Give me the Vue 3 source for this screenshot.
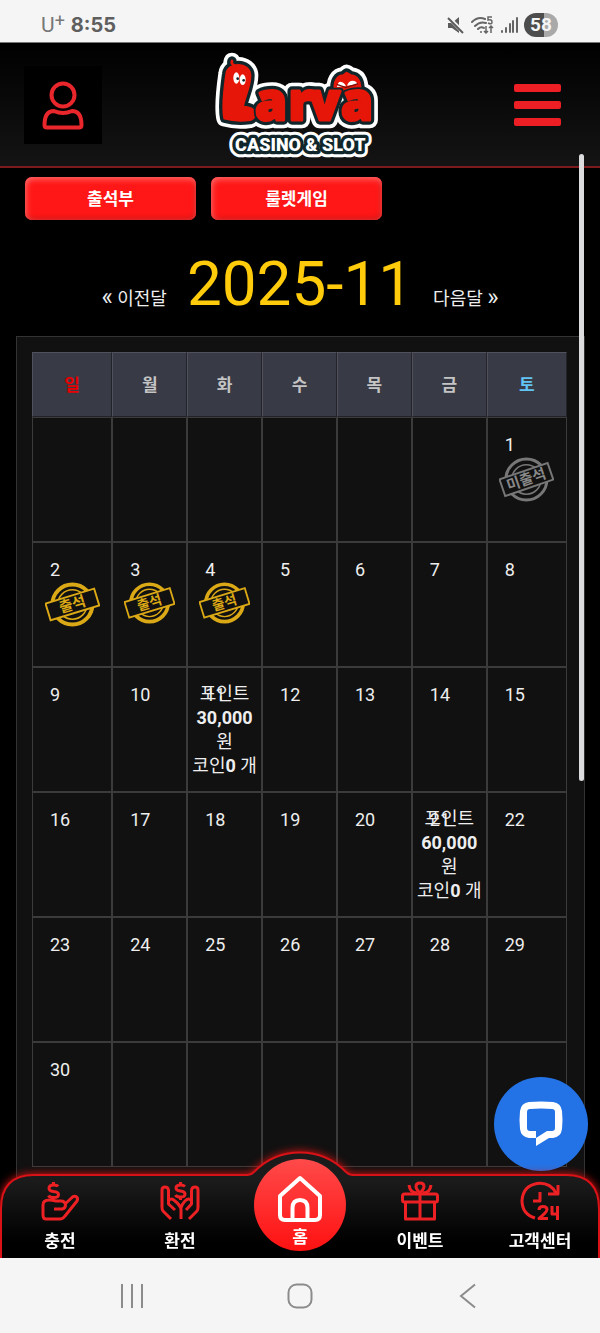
<script setup>
const weekdays = [
  { name: '일', tone: 'sun' },
  { name: '월', tone: '' },
  { name: '화', tone: '' },
  { name: '수', tone: '' },
  { name: '목', tone: '' },
  { name: '금', tone: '' },
  { name: '토', tone: 'sat' },
]

const attended = [2, 3, 4]
const missed = [1]
const rewards = { 11: '30,000', 21: '60,000' }
const firstWeekday = 6
const dayCount = 30

const weeks = Array.from({ length: 6 }, (_, w) =>
  Array.from({ length: 7 }, (_, d) => {
    const day = w * 7 + d - firstWeekday + 1
    return day > 0 && day <= dayCount ? day : null
  })
)
</script>

<template>
  <div class="page">
    <div class="status">
      <div class="status-left">
        <span class="carrier">U<sup>+</sup></span>
        <span class="clock">8:55</span>
      </div>
      <div class="status-right">
        <svg viewBox="0 0 18 20" width="18" height="20" aria-hidden="true">
          <path d="M1 8h4l7-6v16l-7-5H1z" fill="#5b5b5b" />
          <path d="M0 1l17 17" stroke="#f5f5f5" stroke-width="4" />
          <path d="M1 3l15 15" stroke="#5b5b5b" stroke-width="2" />
        </svg>
        <svg viewBox="0 0 24 20" width="24" height="20" aria-hidden="true" fill="none" stroke="#666" stroke-width="2">
          <path d="M1 7Q7 1 14 4M4 11q5-5 11-3M7 14q3-3 6-1" stroke-linecap="round" />
          <circle cx="10" cy="17" r="1" fill="#666" stroke="none" />
          <path d="M21 2h-4v3q4-1 4 2t-4 1" stroke-width="1.5" />
          <path d="M15 11v7m-2-2l2 2 2-2M20 18v-7m-2 2l2-2 2 2" stroke-width="1.5" />
        </svg>
        <svg viewBox="0 0 17 18" width="17" height="18" aria-hidden="true" fill="#666">
          <rect x="0" y="14" width="2" height="3" rx="1" /><rect x="4" y="11" width="2" height="6" rx="1" />
          <rect x="8" y="7" width="2" height="10" rx="1" /><rect x="11" y="4" width="2" height="13" rx="1" />
          <rect x="15" y="1" width="2" height="16" rx="1" />
        </svg>
        <span class="battery">58</span>
      </div>
    </div>

    <header class="header">
      <button class="user" type="button" aria-label="내 정보">
        <svg viewBox="0 0 42 50" width="42" height="50" fill="none" stroke="#e9262b" stroke-width="4" stroke-linejoin="round" aria-hidden="true">
          <circle cx="21" cy="15" r="11.5" />
          <path d="M12 31Q21 35 30 31C37 31 39.500 37 39.500 45Q39.500 47.500 37 47.500H5Q2.500 47.500 2.500 45C2.500 37 5 31 12 31Z" />
        </svg>
      </button>
      <a class="logo" href="#" aria-label="Larva Casino &amp; Slot">
        <svg viewBox="30 20 540 345" width="180" height="115">
          <defs>
            <g id="logo-worm" stroke-linejoin="round" stroke-linecap="round">
              <path d="M74 234C66 200 76 128 80 100C84 66 148 66 150 104C151 140 132 168 128 200Q150 200 160 210Q170 232 150 238Q110 244 74 234Z" />
              <path d="M108 78Q92 72 96 62" fill="none" />
            </g>
            <g id="logo-cap" stroke-linejoin="round">
              <path d="M406 155C400 122 414 106 430 106L440 98L452 106C474 108 482 124 480 155Z" />
            </g>
            <g id="logo-letters" stroke-linejoin="round">
              <text class="wordmark" x="166 266 328 424" y="240">arva</text>
            </g>
          </defs>
          <g stroke="#fff" fill="#fff" stroke-width="50">
            <use href="#logo-worm" /><use href="#logo-cap" /><use href="#logo-letters" />
          </g>
          <text class="tagline plate" x="301" y="331" text-anchor="middle" aria-hidden="true">CASINO &amp; SLOT</text>
          <g stroke="#10262a" fill="#10262a" stroke-width="28">
            <use href="#logo-worm" /><use href="#logo-cap" /><use href="#logo-letters" />
          </g>
          <g stroke="#e61608" fill="#e61608" stroke-width="8">
            <use href="#logo-worm" /><use href="#logo-cap" />
          </g>
          <use href="#logo-letters" stroke="#10262a" fill="#10262a" stroke-width="20" />
          <use href="#logo-letters" stroke="#e61608" fill="#e61608" stroke-width="9" />
          <g fill="#fff">
            <ellipse cx="109" cy="113" rx="9" ry="17" /><ellipse cx="128" cy="118" rx="9" ry="16" />
            <path d="M411 140Q414 122 424 125Q434 127 438 138ZM441 136Q446 121 458 121Q470 121 472 132Z" />
          </g>
          <g fill="#10262a"><circle cx="113" cy="115" r="4" /><circle cx="131" cy="120" r="4" /></g>
          <path d="M410 132L438 142L474 130" stroke="#7b0d08" stroke-width="4" fill="none" />
          <text class="tagline" x="301" y="331" text-anchor="middle">CASINO &amp; SLOT</text>
        </svg>
      </a>
      <button class="menu" type="button" aria-label="메뉴"><i></i><i></i><i></i></button>
    </header>

    <main class="main">
      <div class="actions">
        <button type="button">출석부</button>
        <button type="button">룰렛게임</button>
      </div>

      <div class="month">
        <a href="#"><span class="chev">«</span> 이전달</a>
        <h1>2025-11</h1>
        <a href="#">다음달 <span class="chev">»</span></a>
      </div>

      <section class="frame">
        <table>
          <thead>
            <tr>
              <th v-for="w in weekdays" :key="w.name" :class="w.tone" scope="col">{{ w.name }}</th>
            </tr>
          </thead>
          <tbody>
            <tr v-for="(week, i) in weeks" :key="i">
              <td v-for="(day, j) in week" :key="j">
                <span v-if="day" class="date">{{ day }}</span>
                <div v-if="rewards[day]" class="reward">
                  포인트<br /><b>{{ rewards[day] }}</b><br />원<br />코인<b>0</b> 개
                </div>
                <svg v-if="attended.includes(day)" class="stamp gold" viewBox="0 0 56 46">
                  <circle cx="28" cy="23" r="20.500" stroke-width="4" />
                  <circle cx="28" cy="23" r="15" stroke-width="1.500" />
                  <g transform="rotate(-17 28 23)">
                    <rect x="2" y="14" width="52" height="18" fill="#111" stroke-width="2" />
                    <text x="28" y="28" text-anchor="middle">출석</text>
                  </g>
                </svg>
                <svg v-if="missed.includes(day)" class="stamp grey" viewBox="0 0 56 46">
                  <circle cx="28" cy="23" r="21" stroke-width="3" />
                  <circle cx="28" cy="23" r="15" stroke-width="1.500" />
                  <g transform="rotate(-19 28 23)">
                    <rect x="2" y="14" width="52" height="18" fill="#111" stroke-width="2" />
                    <text x="28" y="28" text-anchor="middle">미출석</text>
                  </g>
                </svg>
              </td>
            </tr>
          </tbody>
        </table>
      </section>
    </main>

    <div class="scrollbar"></div>

    <div class="dock">
      <button class="chat" type="button" aria-label="채팅 상담">
        <svg viewBox="0 0 46 46" width="46" height="46" aria-hidden="true">
          <path d="M11 1Q23 0 35 1Q43 2 44 10Q45 19 44 28Q43 36 35 37H31L18 45V37H11Q3 36 2 28Q1 19 2 10Q3 2 11 1Z" fill="#fff" />
          <path d="M12 8Q23 7 34 8Q37 8 37 11V27Q37 30 34 30H29L18 37V30H12Q9 30 9 27V11Q9 8 12 8Z" fill="#2473e6" />
        </svg>
      </button>

      <nav class="tabs">
        <svg class="tabs-bg" viewBox="0 0 600 113" preserveAspectRatio="none" aria-hidden="true">
          <defs>
            <linearGradient id="bar-fill" x1="0" y1="0" x2="0" y2="1">
              <stop offset="0.250" stop-color="#1b1b1b" /><stop offset="0.800" stop-color="#000" />
            </linearGradient>
          </defs>
          <path d="M1 120V64Q1 30 34 30H248Q251 30 254 27A64 64 0 0 1 346 27Q349 30 352 30H566Q599 30 599 64V120" fill="url(#bar-fill)" stroke="#d81216" stroke-width="2" vector-effect="non-scaling-stroke" />
        </svg>
        <a class="tab" href="#">
          <svg viewBox="0 0 38 38" aria-hidden="true">
            <path d="M17 4.500Q16 3 12.500 3Q8 3 8 6.200Q8 9 12.500 9.500Q17.500 10 17.500 12.500Q17.500 15.500 12.500 15.500Q8.500 15.500 7.500 13.500M12.500 0v3M12.500 15.500v4" />
            <path d="M13 27H21Q24.500 26.500 24.500 23Q24 19 20 19H15Q12 18 8 18Q2 18 2 23V33Q2 37 5 37H19Q22 37 24 34L36 19Q37.500 16 35 14.500Q32.500 13.500 30.500 16L24 22" />
          </svg>
          <span>충전</span>
        </a>
        <a class="tab" href="#">
          <svg viewBox="0 0 38 38" aria-hidden="true">
            <path d="M24 4.500Q22.500 3 19.500 3Q15 3 15 6Q15 8.500 19.500 9Q24 9.500 24 12Q24 15 19.500 15Q15.500 15 14.500 13M19.500 0v3M19.500 15v3" />
            <path d="M10 37L2 29Q1 28 1 25V8Q1 5 4 5Q7 5 7.500 8V22L14 28M7.500 19Q10 15 14 19Q19 23 20 27V37M28 37L36 29Q37 28 37 25V8Q37 5 34 5Q31 5 30.500 8V22L25 28M30.500 19Q28 15 24 19Q21 22 20 26" />
          </svg>
          <span>환전</span>
        </a>
        <a class="tab home" href="#">
          <svg viewBox="0 0 46 46" aria-hidden="true">
            <path d="M23 2L43 20V39Q43 44 38 44H8Q3 44 3 39V20ZM15.500 44V32Q15.500 24 23 24Q30.500 24 30.500 32V44" />
          </svg>
          <span>홈</span>
        </a>
        <a class="tab" href="#">
          <svg viewBox="0 0 38 38" aria-hidden="true">
            <rect x="1.500" y="12" width="35" height="8" rx="2" />
            <path d="M4.500 20V37H33.500V20M19 12V37M19 11Q15 7 15 4.500Q15 1 19 1Q23 1 23 4.500Q23 7 19 11ZM16 11Q9 11 8 3M22 11Q29 11 30 3" />
          </svg>
          <span>이벤트</span>
        </a>
        <a class="tab" href="#">
          <svg viewBox="0 0 38 38" aria-hidden="true">
            <path d="M14 36Q1 32 1 18.500Q2 4 16 1.500Q29 0 35 11M37 3V12H27M19 10V19H12" />
            <path d="M18 28Q18 24.500 22 24.500Q26 24.500 26 27.500Q26 30 18 36.500H27M31 24V32H37M36.500 24V38" />
          </svg>
          <span>고객센터</span>
        </a>
      </nav>

      <div class="sysnav">
        <button type="button" aria-label="최근 앱">
          <svg viewBox="0 0 26 26" width="26" height="26"><path d="M3 1V25M13 1V25M23 1V25" /></svg>
        </button>
        <button type="button" aria-label="홈 화면">
          <svg viewBox="0 0 26 26" width="26" height="26"><rect x="1.500" y="1.500" width="23" height="23" rx="8" /></svg>
        </button>
        <button type="button" aria-label="뒤로">
          <svg viewBox="0 0 26 26" width="26" height="26"><path d="M20 1.500L6 13L20 24.500" /></svg>
        </button>
      </div>
    </div>
  </div>
</template>

<style>
body {
  margin: 0;
  background: #000;
}
</style>

<style scoped>
.page {
  position: relative;
  display: flex;
  flex-direction: column;
  min-height: 100vh;
  box-sizing: border-box;
  padding-bottom: 75px;
  background: #000;
  color: #eee;
  font-family: Roboto, "Noto Sans CJK KR", sans-serif;
  font-size: 18px;
}
.page * { box-sizing: border-box; }
button {
  border: 0;
  padding: 0;
  background: none;
  font-family: inherit;
  color: inherit;
}
a { color: inherit; text-decoration: none; }
svg { display: block; }

.status {
  display: flex;
  justify-content: space-between;
  align-items: center;
  height: 43px;
  padding: 8px 42px 0 41px;
  background: #f5f5f5;
  border-bottom: 1px solid #777;
  color: #5f5f5f;
}
.status-left, .status-right { display: flex; align-items: center; gap: 6px; }
.carrier { font-size: 21px; font-weight: 400; line-height: 28px; color: #777; }
.carrier sup { font-size: 18px; line-height: 0; vertical-align: 5px; }
.clock { font-family: Inter, sans-serif; font-size: 20px; font-weight: 700; line-height: 28px; }
.battery {
  width: 34px;
  height: 24px;
  border-radius: 12px;
  background: linear-gradient(90deg, #4d4d4d 58%, #a9a9a9 58%);
  color: #f5f5f5;
  font-size: 19px;
  font-weight: 700;
  line-height: 24px;
  text-align: center;
}

.header {
  display: grid;
  grid-template-columns: 1fr auto 1fr;
  align-items: center;
  height: 125px;
  padding: 0 39px 0 24px;
  background: linear-gradient(#000, #141414);
  border-bottom: 2px solid #7c1a1e;
}
.user {
  display: grid;
  place-items: center;
  width: 78px;
  height: 78px;
  background: #000;
}
.logo { margin-left: 15px; }
.wordmark { font: 800 152px "Open Sans", sans-serif; }
.tagline {
  font: 900 54px Roboto, sans-serif;
  fill: #fff;
  stroke: #10262a;
  stroke-width: 20;
  stroke-linejoin: round;
  paint-order: stroke;
}
.plate { stroke: #fff; stroke-width: 38; }
.menu {
  justify-self: end;
  display: grid;
  gap: 9px;
  width: 47px;
}
.menu i { height: 8px; border-radius: 2px; background: #ed1f24; }

.main { flex: 1; display: flex; flex-direction: column; padding-top: 9px; }
.actions {
  display: grid;
  grid-template-columns: repeat(3, 1fr);
  gap: 15px;
  padding: 0 32px 0 25px;
}
.actions button {
  height: 43px;
  padding-bottom: 2px;
  border-radius: 7px;
  background: #ff1717;
  box-shadow: inset 1px 2px 6px #ff7070, inset -1px -2px 5px #c90d0d;
  color: #fff;
  font-size: 17px;
  font-weight: 700;
}
.month {
  display: flex;
  justify-content: center;
  align-items: baseline;
  gap: 20px;
  margin: 32px 0 20px;
}
.month h1 {
  margin: 0;
  color: #ffcb0b;
  font-size: 62px;
  font-weight: 400;
  line-height: 64px;
}
.month a { line-height: 24px; }
.chev { font-size: 24px; line-height: 24px; }

.frame {
  flex: 1;
  margin: 0 15px 0 16px;
  padding: 15px 17px 16px 15px;
  border: 1px solid #333;
  background: #111;
}
table {
  width: 100%;
  table-layout: fixed;
  border-collapse: separate;
  border-spacing: 0;
}
th {
  width: 14%;
  height: 65px;
  padding: 0 0 2px;
  border: 1px solid;
  border-color: #50515a #22232a #22232a #50515a;
  background: #383a45;
  color: #c4c4c4;
  font-size: 17px;
}
th:first-child, th:last-child { width: 15%; }
.sun { color: #e60000; }
.sat { color: #62c4f5; }
td {
  position: relative;
  height: 125px;
  padding: 0;
  border: 1px solid #3b3b3b;
  vertical-align: top;
}
.date { position: absolute; top: 15px; left: 17px; line-height: 24px; }
.reward { padding-top: 14px; line-height: 24px; text-align: center; white-space: nowrap; }
.stamp { width: 70%; margin: 39px auto 0; fill: none; }
.stamp text { font-family: "Noto Sans CJK KR", sans-serif; font-weight: 700; stroke: none; }
.gold { stroke: #dca916; }
.gold text { fill: #dca916; font-size: 15px; }
.grey { stroke: #777; }
.grey text { fill: #888; font-size: 15px; }

.scrollbar {
  position: absolute;
  top: 154px;
  right: 16px;
  width: 5px;
  height: 47vh;
  border-radius: 3px;
  background: #dcdcdf;
}

.dock { position: fixed; left: 0; right: 0; bottom: 0; }
.chat {
  position: absolute;
  right: 12px;
  bottom: 162px;
  display: grid;
  place-items: center;
  width: 94px;
  height: 94px;
  border-radius: 50%;
  background: #2473e6;
}
.tabs {
  position: relative;
  display: grid;
  grid-template-columns: repeat(5, 1fr);
  height: 83px;
}
.tabs-bg {
  position: absolute;
  left: 0;
  bottom: 0;
  width: 100%;
  height: 113px;
  filter: drop-shadow(0 0 4px #e01010);
}
.tab {
  position: relative;
  display: flex;
  flex-direction: column;
  align-items: center;
  gap: 9px;
  padding-top: 7px;
  color: #fff;
  font-size: 17px;
  font-weight: 700;
  line-height: 24px;
}
.tab svg {
  width: 38px;
  height: 38px;
  overflow: visible;
  fill: none;
  stroke: #ed2024;
  stroke-width: 3;
  stroke-linejoin: round;
}
.home {
  justify-self: center;
  width: 92px;
  height: 92px;
  margin-top: -16px;
  padding-top: 17px;
  gap: 3px;
  border-radius: 50%;
  background: linear-gradient(#ff4a4a, #ff1111);
}
.home svg { width: 46px; height: 46px; stroke: #fff; stroke-width: 4; }
.sysnav {
  position: relative;
  display: grid;
  grid-template-columns: repeat(3, 28%);
  justify-content: center;
  height: 75px;
  background: #f5f5f5;
}
.sysnav button { display: grid; place-items: center; }
.sysnav svg { fill: none; stroke: #8c8c8c; stroke-width: 2; }
</style>
